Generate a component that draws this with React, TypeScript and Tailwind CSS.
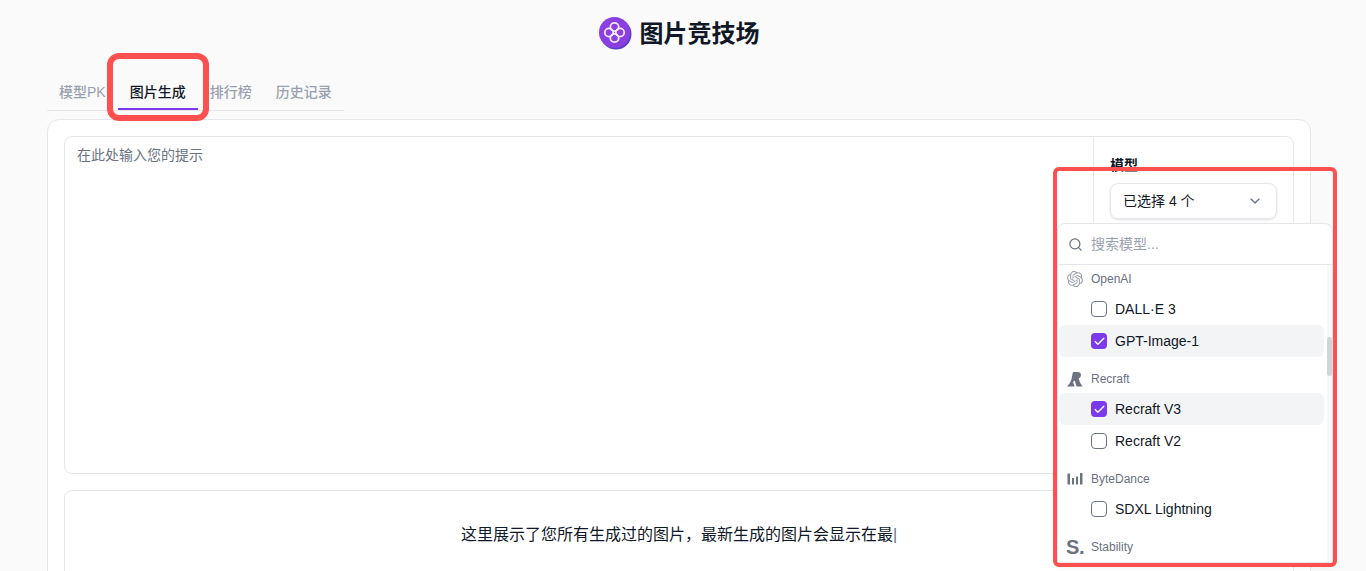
import { Search, ChevronDown, Check } from 'lucide-react'
import { SiOpenai } from 'react-icons/si'

const font = { fontFamily: '"Liberation Sans", "Noto Sans CJK SC", sans-serif' }

function Logo() {
  return (
    <svg width="33" height="33" viewBox="0 0 33 33" className="shrink-0">
      <circle cx="17" cy="17" r="15.5" fill="#5b3fc4" />
      <circle cx="15.5" cy="15.5" r="15.5" fill="#8b3fe0" />
      <g fill="none" stroke="#f3e8ff" strokeWidth="1.8">
        <circle cx="15.5" cy="10" r="4.200" />
        <circle cx="10" cy="15.500" r="4.200" />
        <circle cx="21" cy="15.500" r="4.200" />
        <circle cx="15.500" cy="21" r="4.200" />
      </g>
    </svg>
  )
}

function RecraftIcon() {
  return (
    <svg width="16" height="16" viewBox="0 0 16 16" fill="#6b7280" className="shrink-0">
      <path d="M6 1h4.500c2.600 0 3.700 1.700 3.400 3.600-.2 1.400-1 2.400-2.300 3l1.400 4 2.500 3.900H9.500L7.700 9.500 6 11l1.600 4.500H0c3-2.500 4.700-7 5-10 .2-1.600.6-3 1-4.500Z" />
    </svg>
  )
}

function ByteDanceIcon() {
  return (
    <svg width="16" height="16" viewBox="0 0 16 16" fill="#6b7280">
      <rect x="0.500" y="2.500" width="2.500" height="11" />
      <rect x="5" y="7" width="2" height="6.500" />
      <rect x="9" y="5.500" width="2" height="8" />
      <rect x="13" y="2" width="2.500" height="11.500" />
    </svg>
  )
}

function GroupLabel({ icon, name }: { icon: React.ReactNode; name: string }) {
  return (
    <div className="flex items-center h-[28px] mt-2 pl-[8px]">
      <span className="w-[16px] h-[16px] flex items-center justify-center text-gray-500">{icon}</span>
      <span className="ml-2 text-xs text-gray-500">{name}</span>
    </div>
  )
}

function ModelRow({ name, checked }: { name: string; checked?: boolean }) {
  return (
    <div className={`flex items-center h-[32px] pl-[32px] rounded-md text-sm text-gray-900 ${checked ? 'bg-gray-100' : ''}`}>
      {checked ? (
        <span className="w-[16px] h-[16px] rounded-[4px] bg-[#7c3aed] flex items-center justify-center">
          <Check size={13} strokeWidth={2.500} className="text-white" />
        </span>
      ) : (
        <span className="w-[16px] h-[16px] rounded-[4px] border border-gray-500 bg-white" />
      )}
      <span className="ml-2">{name}</span>
    </div>
  )
}

export default function App() {
  return (
    <div className="relative h-[571px] overflow-hidden bg-[#fafafa]" style={font}>
      <div className="w-[1358px] px-[47px]">
        {/* 标题 */}
        <div className="flex justify-center gap-2 pt-[17px] h-[74px] items-start">
          <Logo />
          <h1 className="text-2xl font-bold text-gray-900 leading-[33px]">图片竞技场</h1>
        </div>

        {/* Tabs */}
        <div className="flex w-[297px] border-b border-gray-200 h-[37px] text-sm font-medium">
          <div className="px-3 flex items-center text-gray-400">模型PK</div>
          <div className="px-3 flex items-center text-gray-900 border-b-2 border-[#7c3aed] h-[36px] pt-[2px]">图片生成</div>
          <div className="px-3 flex items-center text-gray-400">排行榜</div>
          <div className="px-3 flex items-center text-gray-400">历史记录</div>
        </div>

        <div className="mt-2 bg-white border border-gray-200 rounded-xl p-4 h-[600px]">
          <div className="flex h-[338px] border border-gray-200 rounded-lg">
            <textarea
              className="flex-1 resize-none outline-none px-3 py-2 text-sm text-gray-900 placeholder:text-gray-500"
              placeholder="在此处输入您的提示"
            />
            <div className="w-[200px] border-l border-gray-200 px-4 pt-[18px]">
              <div className="text-sm font-bold text-gray-900 leading-5">模型</div>
              <div className="mt-2 w-[167px] h-[36px] flex items-center justify-between pl-3 pr-[13px] border border-gray-200 rounded-lg shadow-sm text-sm text-gray-900">
                已选择 4 个
                <ChevronDown size={16} className="text-gray-500" />
              </div>
            </div>
          </div>
          <div className="mt-4 h-[200px] border border-gray-200 rounded-lg pt-[32px] text-center text-base text-gray-900">
            这里展示了您所有生成过的图片，最新生成的图片会显示在最<span className="text-gray-500 font-light">|</span>
          </div>
        </div>
      </div>

      {/* 模型下拉 */}
      <div className="absolute left-[1057px] top-[223px] w-[276px] h-[340px] bg-white border border-gray-200 rounded-t-lg shadow-md overflow-hidden flex flex-col">
        <div className="flex items-center h-[41px] pl-[10px] border-b border-gray-200 shrink-0">
          <Search size={15} className="text-gray-500" />
          <span className="ml-2 text-sm text-gray-400">搜索模型...</span>
        </div>
        <div className="flex flex-1 min-h-0">
          <div className="flex-1 overflow-hidden pl-[1px] pr-[3px]">
            <div className="-mt-[8px]">
              <GroupLabel icon={<SiOpenai size={16} className="text-gray-400" />} name="OpenAI" />
              <ModelRow name="DALL·E 3" />
              <ModelRow name="GPT-Image-1" checked />
              <GroupLabel icon={<RecraftIcon />} name="Recraft" />
              <ModelRow name="Recraft V3" checked />
              <ModelRow name="Recraft V2" />
              <GroupLabel icon={<ByteDanceIcon />} name="ByteDance" />
              <ModelRow name="SDXL Lightning" />
              <GroupLabel icon={<span className="text-[20px] font-bold leading-none tracking-tight">S.</span>} name="Stability" />
            </div>
          </div>
          <div className="w-[5px] bg-[#f8f8f8] pt-[72px] shrink-0">
            <div className="h-[39px] bg-[#d4d4d8] rounded-full" />
          </div>
        </div>
      </div>

      {/* 标注框 */}
      <div className="absolute left-[107px] top-[53px] w-[102px] h-[68px] border-[6px] border-[#ff5050] rounded-[12px]" />
      <div className="absolute left-[1053px] top-[167px] w-[284px] h-[400px] border-4 border-[#ff5050] rounded-md" />
    </div>
  )
}
